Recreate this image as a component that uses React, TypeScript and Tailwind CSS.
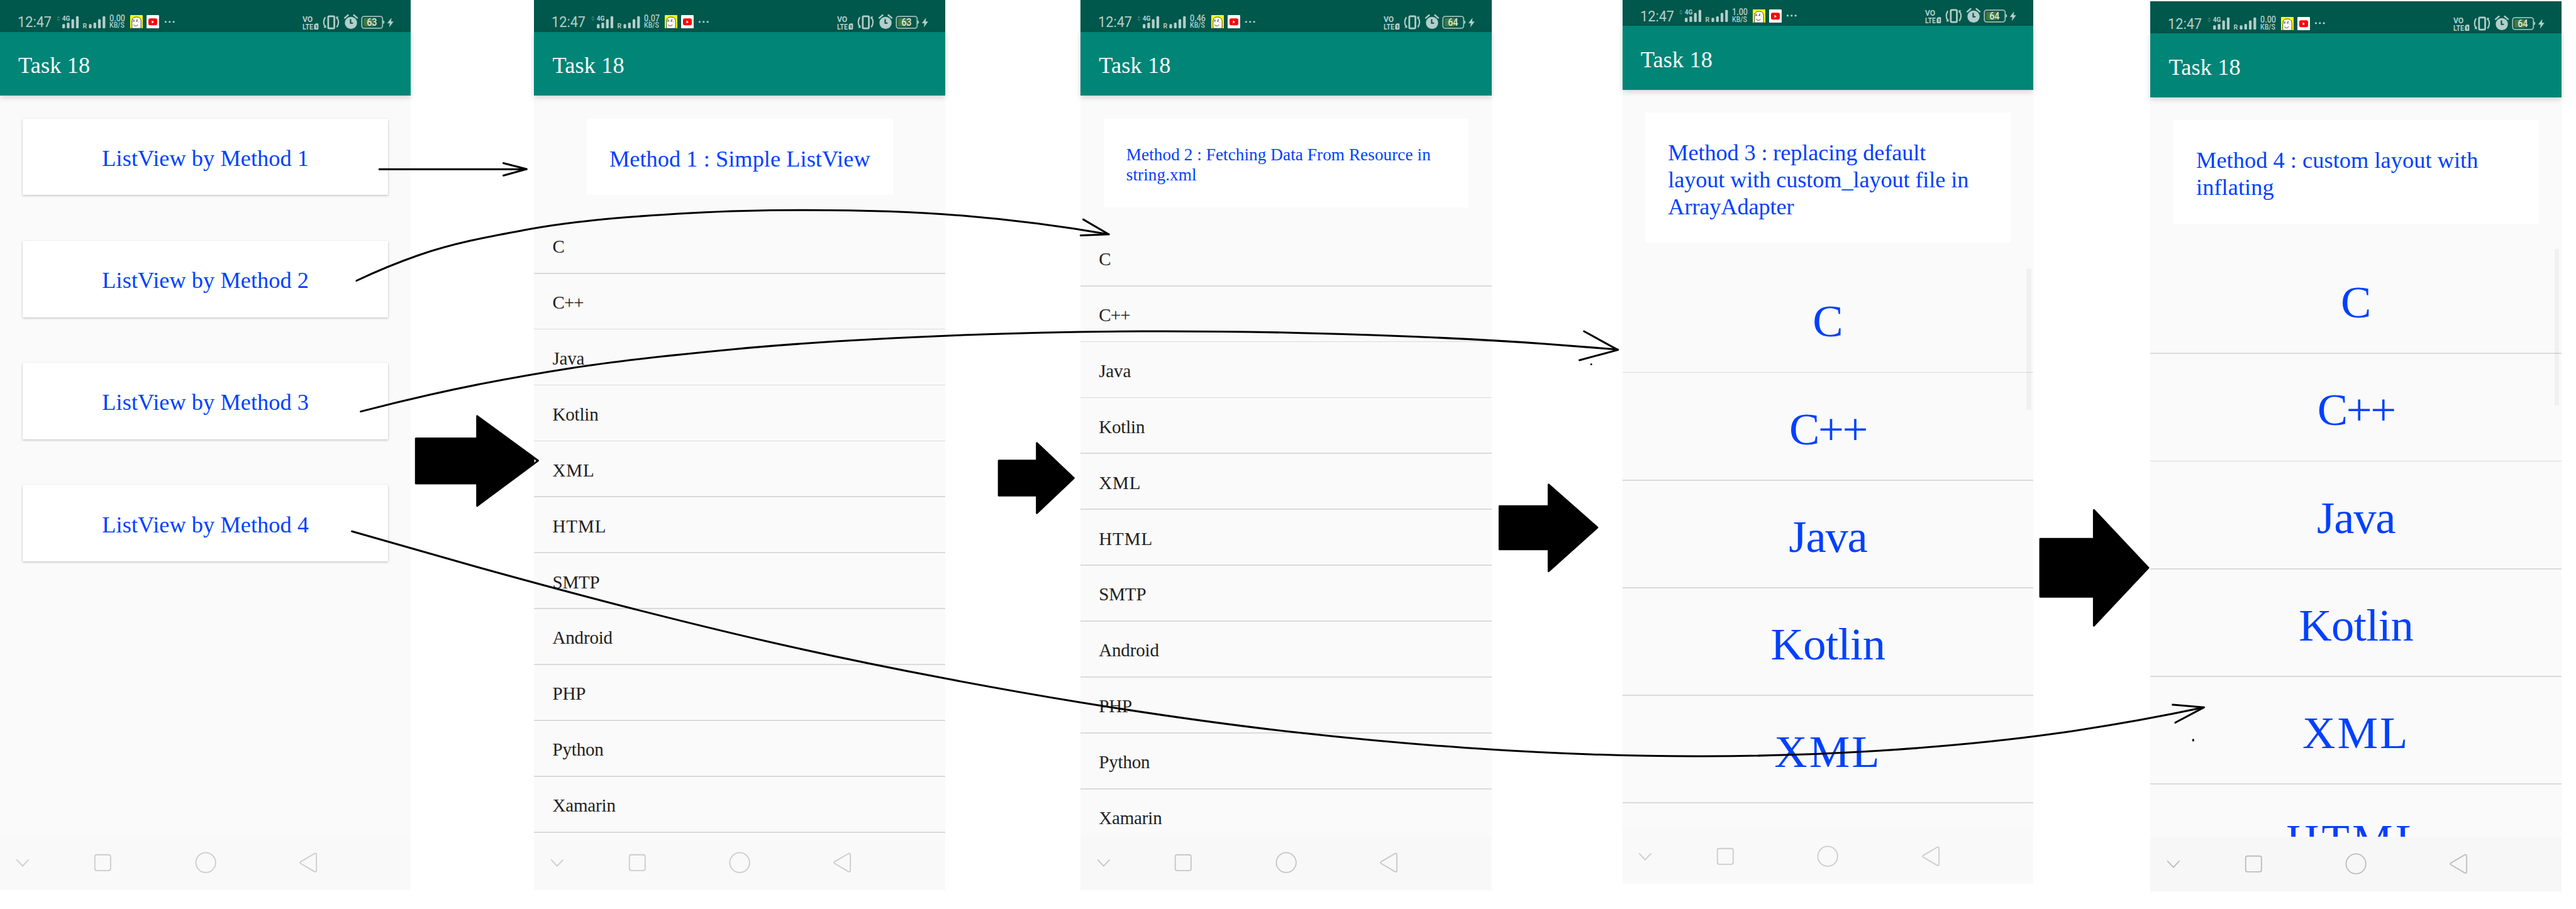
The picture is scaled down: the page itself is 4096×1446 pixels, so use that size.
import React from "react";

const LANGS = ["C", "C++", "Java", "Kotlin", "XML", "HTML", "SMTP", "Android", "PHP", "Python", "Xamarin"];

/* Letter spacing of the small list rows and of the large ones. */
const SMALL_TRACKING: Record<string, string> = {
  "C++": "tracking-[-1.5px]",
  XML: "tracking-[1.5px]",
  HTML: "tracking-[1.5px]",
};
const BIG_TRACKING: Record<string, string> = {
  "C++": "tracking-[-4px]",
  Java: "tracking-[-2px]",
  Kotlin: "tracking-[-1px]",
  XML: "tracking-[5px]",
  HTML: "tracking-[7px]",
};

function Bars() {
  return (
    <>
      <rect x="0" y="21" width="7" height="11" rx="2.5" />
      <rect x="12" y="17" width="7" height="15" rx="2.5" />
      <rect x="24" y="8" width="7" height="24" rx="2.5" />
      <rect x="36" y="0" width="7" height="32" rx="2.5" />
    </>
  );
}

function StatusBar({ speed, battery }: { speed: string; battery: string }) {
  return (
    <div className="flex h-[84px] shrink-0 items-start justify-between bg-[#00574b] pl-[46px] pr-[44px] font-['Roboto'] text-[#b3cecb]">
      <div className="flex pt-[36px]">
        <span className="mt-[1px] block h-[44px] w-[103px] origin-left scale-x-[0.92] whitespace-nowrap text-[39px] leading-[46px]">12:47</span>
        <svg className="h-[44px] w-[131px]" viewBox="149 36 131 44" fill="currentColor">
          <path d="M149 47l4.700-5.500 4.700 5.500zM149 49.500l4.700 5.500 4.700-5.500z" opacity="0.3" />
          <g transform="translate(164 42)">
            <Bars />
          </g>
          <g transform="translate(234 42)">
            <Bars />
          </g>
          <text x="163.500" y="54.600" fontSize="18" fontWeight="700" textLength="21" lengthAdjust="spacingAndGlyphs">4G</text>
          <text x="217.500" y="74" fontSize="19" fontWeight="600" textLength="11" lengthAdjust="spacingAndGlyphs">R</text>
        </svg>
        <div className="ml-[8px] flex h-[44px] w-[55px] origin-left scale-x-[0.87] flex-col whitespace-nowrap font-medium">
          <span className="h-[19px] text-[24px] leading-[26px]">{speed}</span>
          <span className="text-[20px] leading-[24px]">KB/S</span>
        </div>
        <svg className="mt-[4px] h-[35px] w-[33px]" viewBox="0 0 33 35">
          <rect width="33" height="35" rx="1.500" fill="#fbff14" />
          <path d="M4.500 35V17C4.500 9 9 5 17 5s11.500 5 11.500 12v18z" fill="#fff" stroke="#111" strokeWidth="1.300" />
          <path d="M7 16.500l5-1M15 16.500l5-1M7 13.500l4-1M16 13.500l4-1.500M9 25c2 5 9 5 11 0" fill="none" stroke="#111" strokeWidth="1.400" />
          <circle cx="22.500" cy="18.500" r="1.500" fill="#f9b9c0" />
          <circle cx="6.500" cy="18.500" r="1.200" fill="#f9b9c0" />
        </svg>
        <svg className="ml-[10px] mt-[4px] h-[35px] w-[33px]" viewBox="0 0 33 35">
          <rect width="33" height="35" rx="2" fill="#fff" />
          <rect x="5" y="8.500" width="23" height="18.500" rx="4.500" fill="#f00" />
          <path d="M14 14v8l6-4z" fill="#fff" />
        </svg>
        <svg className="ml-[12px] mt-[18px] h-[6px] w-[30px]" viewBox="0 0 30 6" fill="currentColor">
          <circle cx="4" cy="3" r="2.700" />
          <circle cx="14.500" cy="3" r="2.700" />
          <circle cx="25" cy="3" r="2.700" />
        </svg>
      </div>
      <svg className="mt-[34px] h-[46px] w-[242px]" viewBox="794 34 242 46" fill="currentColor">
        <text x="795.500" y="57" fontSize="22" fontWeight="700" textLength="27" lengthAdjust="spacingAndGlyphs">VO</text>
        <text x="795.500" y="76.700" fontSize="22" fontWeight="700" textLength="28" lengthAdjust="spacingAndGlyphs">LTE</text>
        <path d="M830 61h5.500a2 2 0 0 1 2 2v12a2 2 0 0 1-2 2H828a2 2 0 0 1-2-2V65z" />
        <text x="828.500" y="74.500" fontSize="13" fontWeight="700" fill="#00574b" textLength="6">1</text>
        <rect x="863.200" y="42.200" width="16" height="31.500" rx="2.500" fill="none" stroke="currentColor" strokeWidth="4.500" />
        <path d="M855.500 44.500c-5.500 8-5.500 18 0 25M885.500 71c6-8 6-18 1-25" fill="none" stroke="currentColor" strokeWidth="3.500" />
        <path d="M850.500 72.500h7.500l-1-7.500zM883.500 43h7.500l-6.500 7z" />
        <circle cx="923" cy="59.500" r="16" />
        <path d="M906.500 46.500l9-7.500M939.500 46.500l-9-7.500" stroke="currentColor" strokeWidth="4" strokeLinecap="round" />
        <path d="M922 51v9h5" fill="none" stroke="#00574b" strokeWidth="3.600" strokeLinecap="round" />
        <rect x="956" y="47" width="28" height="22" rx="3" fill="#43783a" />
        <rect x="951.500" y="42.500" width="54.500" height="31" rx="6" fill="none" stroke="#9cc0bb" strokeWidth="3" />
        <path d="M1007 53a4 4.500 0 0 1 0 9z" fill="#9cc0bb" />
        <text x="964.500" y="67.500" fontSize="26" fontWeight="600" fill="#d3e2dd" textLength="27" lengthAdjust="spacingAndGlyphs">{battery}</text>
        <path d="M1029.500 46l-11 14.500h6.500l-1.500 10.500 11.500-15h-6.500z" />
      </svg>
    </div>
  );
}

function NavBar({ className }: { className: string }) {
  return (
    <div className={"flex h-[144px] shrink-0 items-center pl-[42px] " + className}>
      <svg className="h-[60px] w-[36px]" viewBox="0 0 36 60" fill="none" stroke="currentColor" strokeWidth="3">
        <path d="M2 22l16 17 16-17" />
      </svg>
      <svg className="ml-[162px] h-[60px] w-[60px]" viewBox="0 0 60 60" fill="none" stroke="currentColor" strokeWidth="3">
        <rect x="9.500" y="9.500" width="41.500" height="41.500" rx="5" />
      </svg>
      <svg className="ml-[210px] h-[60px] w-[60px]" viewBox="0 0 60 60" fill="none" stroke="currentColor" strokeWidth="3">
        <circle cx="30" cy="30" r="26" />
      </svg>
      <svg className="ml-[210px] h-[60px] w-[60px]" viewBox="0 0 60 60" fill="none" stroke="currentColor" strokeWidth="3" strokeLinejoin="round">
        <path d="M10.500 27.500L46 6.500q5-2.500 5.500 3v41q-.5 5.500-5.500 3L10.500 32.500q-4-2.500 0-5z" />
      </svg>
    </div>
  );
}

function Phone({ className, speed, battery, nav, children }: { className: string; speed: string; battery: string; nav: string; children: React.ReactNode }) {
  return (
    <section className={"flex h-[2340px] w-[1080px] shrink-0 flex-col bg-[#fafafa] " + className}>
      <StatusBar speed={speed} battery={battery} />
      <header className="z-10 flex h-[168px] shrink-0 items-center bg-[#008577] pl-[48px] pt-[10px] text-[60px] leading-[71px] tracking-[0.2px] text-white shadow-[0_5px_14px_rgba(0,0,0,0.16)]">Task 18</header>
      <main className="relative flex min-h-0 flex-1 flex-col overflow-hidden pt-[60px]">{children}</main>
      <NavBar className={nav} />
    </section>
  );
}

function Title({ className, lines }: { className: string; lines: string[] }) {
  return (
    <h2 className={"mb-[60px] shrink-0 whitespace-nowrap bg-white px-[60px] text-[#0040ff] " + className}>
      {lines.map((l) => (
        <span key={l} className="block">
          {l}
        </span>
      ))}
    </h2>
  );
}

function SmallList() {
  return (
    <ul>
      {LANGS.map((l) => (
        <li key={l}>
          <div className={"flex h-[144px] items-center pl-[48px] pt-[9px] text-[48px] leading-[56px] text-[#212121] " + (SMALL_TRACKING[l] ?? "tracking-[-0.3px]")}>{l}</div>
          <div className="h-[3px] bg-[#dadada]" />
        </li>
      ))}
    </ul>
  );
}

function BigList({ thumb, count }: { thumb: string; count: number }) {
  return (
    <div className="relative">
      <ul>
        {LANGS.slice(0, count).map((l) => (
          <li key={l}>
            <div className={"flex h-[280px] items-center justify-center pt-[16px] text-[120px] leading-[140px] text-[#0040ff] " + (BIG_TRACKING[l] ?? "")}>{l}</div>
            <div className="h-[3px] bg-[#dadada]" />
          </li>
        ))}
      </ul>
      <div className={"absolute right-[6px] top-[7px] w-[12px] bg-black/[0.035] " + thumb} />
    </div>
  );
}

type Pt = [number, number];

/* Smooth curve through every point: tangents come from the parabola through each point and its neighbours. */
function smooth(p: Pt[]): string {
  const n = p.length;
  const h = p.slice(1).map((q, i) => q[0] - p[i][0]);
  const s = p.slice(1).map((q, i) => (q[1] - p[i][1]) / h[i]);
  const m = p.map((_, i) => (i === 0 || i === n - 1 ? 0 : (s[i - 1] * h[i] + s[i] * h[i - 1]) / (h[i - 1] + h[i])));
  m[0] = 2 * s[0] - m[1];
  m[n - 1] = 2 * s[n - 2] - m[n - 2];
  let d = `M${p[0][0]} ${p[0][1]}`;
  for (let i = 0; i < n - 1; i++) {
    const t = h[i] / 3;
    const [x0, y0] = p[i];
    const [x1, y1] = p[i + 1];
    d += `C${x0 + t} ${y0 + m[i] * t} ${x1 - t} ${y1 - m[i + 1] * t} ${x1} ${y1}`;
  }
  return d;
}

const CURVE_2: Pt[] = [[937, 738], [1100, 671], [1380, 604.5], [1820, 560], [2113, 552.500], [2530, 567], [2914, 616]];
const CURVE_3: Pt[] = [[948, 1082], [1129, 1038], [1500, 968], [1930, 918], [2530, 881], [3000, 871], [3421, 875.500], [4060, 904], [4252, 919]];
const CURVE_4: Pt[] = [[925, 1397], [1244, 1488], [1650, 1597], [2054, 1695], [2485, 1784], [2841, 1847], [3418, 1927], [3850, 1966], [4473, 1988.500], [4937, 1974], [5400, 1929], [5792, 1860]];

function Arrows() {
  return (
    <svg className="pointer-events-none absolute left-0 top-0 z-20 h-[2390px] w-[6770px]" viewBox="0 0 6770 2390" fill="none" stroke="#000" strokeWidth="5" strokeLinecap="round" strokeLinejoin="round">
      <path d="M997 445H1384M1323 429L1384 444.500L1323 461.500" />
      <path d={smooth(CURVE_2)} />
      <path d="M2847 577L2914 616L2840 619" />
      <path d={smooth(CURVE_3)} />
      <path d="M4163 871L4252 920L4151 947" />
      <path d={smooth(CURVE_4)} />
      <path d="M5710 1853L5792 1860L5717 1900" />
      <path d="M4182 958h.1M5764 1945v2" />
      <path fill="#000" d="M1093 1153H1254V1094L1414 1211L1254 1330V1271H1093z" />
      <path fill="#fafafa" stroke="none" d="M1404 1207.500L1409.500 1211.500L1404 1215.500z" />
      <path fill="#000" d="M2625 1211H2725V1165L2822 1257L2725 1349V1303H2625z" />
      <path fill="#000" d="M3941 1331H4070V1274L4198 1387L4070 1502V1444H3941z" />
      <path fill="#000" d="M5362 1417H5503V1341L5646 1493L5503 1645V1569H5362z" />
    </svg>
  );
}

export default function App() {
  return (
    <div className="h-[1446px] w-[4096px] overflow-hidden bg-white">
      <div className="relative flex h-[2390px] w-[6770px] items-start overflow-hidden bg-white font-['Liberation_Serif',serif] [zoom:0.60502]">
        <Phone className="" speed="0.00" battery="63" nav="bg-[#f9f9f9] text-[#cccccc]">
          <div className="flex flex-col gap-[120px] px-[60px]">
            {[1, 2, 3, 4].map((n) => (
              <button key={n} className="block h-[201px] bg-white text-center text-[60px] leading-[71px] tracking-[0.1px] text-[#0040ff] shadow-[0_3px_6px_rgba(0,0,0,0.2),0_0_3px_rgba(0,0,0,0.12)]">
                <span className="mt-[10px] block">ListView by Method {n}</span>
              </button>
            ))}
          </div>
        </Phone>

        <Phone className="ml-[324px]" speed="0.07" battery="63" nav="bg-[#f9f9f9] text-[#cccccc]">
          <Title className="h-[201px] w-[805px] self-center pt-[71px] text-[60px] leading-[71px] tracking-[0.1px]" lines={["Method 1 : Simple ListView"]} />
          <SmallList />
        </Phone>

        <Phone className="ml-[356px]" speed="0.46" battery="64" nav="bg-[#f8f8f8] text-[#c6c6c6]">
          <Title className="mx-[60px] h-[234px] pt-[68px] text-[45px] leading-[53px] tracking-[0.1px]" lines={["Method 2 : Fetching Data From Resource in", "string.xml"]} />
          <SmallList />
        </Phone>

        <Phone className="ml-[344px] mt-[-16px]" speed="1.00" battery="64" nav="bg-[#f9f9f9] text-[#cccccc]">
          <Title className="mx-[60px] h-[342px] pt-[71px] text-[60px] leading-[71px] tracking-[-0.2px]" lines={["Method 3 : replacing default", "layout with custom_layout file in", "ArrayAdapter"]} />
          <BigList thumb="h-[373px]" count={5} />
        </Phone>

        <Phone className="ml-[308px] mt-[4px]" speed="0.00" battery="64" nav="bg-[#f7f7f7] text-[#bdbdbd]">
          <Title className="mx-[60px] h-[272px] pt-[71px] text-[60px] leading-[71px] tracking-[0.1px]" lines={["Method 4 : custom layout with", "inflating"]} />
          <BigList thumb="h-[411px]" count={6} />
        </Phone>

        <Arrows />
      </div>
    </div>
  );
}
